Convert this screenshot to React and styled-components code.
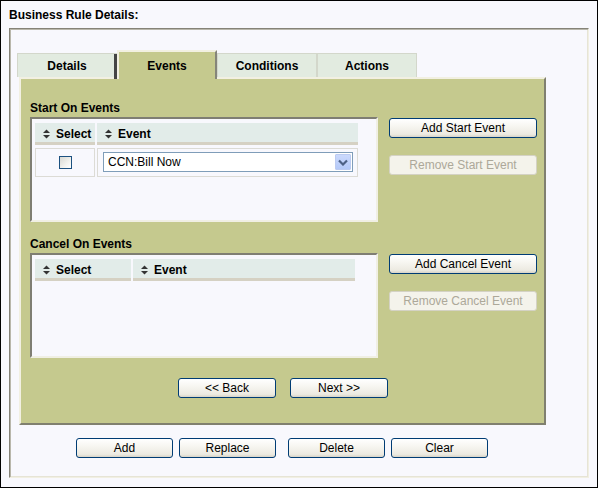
import React from 'react';
import styled, { createGlobalStyle, css } from 'styled-components';

const Global = createGlobalStyle`
  html, body { margin: 0; padding: 0; background: #f8f8fd; }
  body { font-family: "Liberation Sans", Arial, sans-serif; font-size: 12px; color: #000; }
  * { box-sizing: border-box; }
`;

const Frame = styled.div`
  width: 598px;
  height: 488px;
  border: 1px solid #000;
  background: #f8f8fd;
  padding: 7px 0 0 8px;
`;

const Title = styled.div`
  font-weight: bold;
  font-size: 12px;
  line-height: 14px;
  height: 14px;
`;

const Fieldset = styled.div`
  margin-top: 6px;
  width: 580px;
  height: 450px;
  border: 1px solid;
  border-color: #858378 #f1efe2 #f1efe2 #858378;
  box-shadow: inset 1px 1px 0 #b9b7ab, inset -1px -1px 0 #e6e4d6;
  padding: 21px 0 0 7px;
`;

const TabRow = styled.div`
  display: flex;
  align-items: flex-end;
  height: 27px;
`;

const Tab = styled.div`
  width: 100px;
  height: 24px;
  background: #e2ebe0;
  border: 1px solid #d3d7cb;
  border-bottom: none;
  font-weight: bold;
  text-align: center;
  line-height: 14px;
  padding-top: 5px;
  ${p => p.$active && css`
    position: relative;
    z-index: 1;
    height: 29px;
    margin-bottom: -2px;
    background: #c5c98e;
    border-top: 2px solid #f2f0e2;
    border-left: 2px solid #f2f0e2;
    border-right: 2px solid #85857a;
    padding-top: 7px;
    &::before {
      content: '';
      position: absolute;
      left: -5px;
      top: 2px;
      bottom: 0;
      width: 3px;
      background: #454545;
    }
  `}
`;

const Panel = styled.div`
  margin-left: 2px;
  width: 527px;
  height: 348px;
  background: #c5c98e;
  border: 2px solid;
  border-color: #f2f0e2 #80806f #80806f #f2f0e2;
  padding: 21px 0 0 9px;
`;

const Section = styled.div`
  display: grid;
  grid-template-columns: 348px 148px;
  column-gap: 11px;
  row-gap: 3px;
  margin-top: ${p => p.$top || 0}px;
`;

const SectionLabel = styled.div`
  grid-column: 1 / 3;
  font-weight: bold;
  line-height: 14px;
  height: 14px;
  padding-top: 1px;
`;

const ListBox = styled.div`
  width: 348px;
  height: 105px;
  background: #f8f8fd;
  border: 2px solid;
  border-color: #7f7e73 #f0efe4 #f0efe4 #7f7e73;
  padding: 4px 0 0 3px;
`;

const Grid = styled.div`
  display: grid;
  grid-template-columns: ${p => p.$cols};
  column-gap: 2px;
  row-gap: 3px;
`;

const HeadCell = styled.div`
  height: 22px;
  background: #e2ece9;
  border-bottom: 3px solid #d5d1c3;
  display: flex;
  align-items: center;
  padding: 2px 0 0 8px;
  gap: 6px;
  font-weight: bold;
`;

const BodyCell = styled.div`
  height: 29px;
  border: 1px solid #dcdbd5;
  display: flex;
  align-items: flex-start;
  justify-content: ${p => (p.$center ? 'center' : 'flex-start')};
  padding: ${p => (p.$center ? '7px 0 0 0' : '3px 0 0 5px')};
`;

const Checkbox = styled.span`
  display: block;
  width: 13px;
  height: 13px;
  border: 1px solid #1c5180;
  background: linear-gradient(135deg, #d8d8d2 0%, #f2f2ee 60%, #ffffff 100%);
`;

const FakeSelect = styled.div`
  width: 250px;
  height: 20px;
  border: 1px solid #7f9db9;
  background: #fff;
  display: flex;
  align-items: center;
  justify-content: space-between;
  padding-left: 4px;
  font-size: 12px;
`;

const DropButton = styled.span`
  width: 16px;
  height: 16px;
  margin-right: 1px;
  border-radius: 1px;
  background: linear-gradient(#cbd9fd, #b4c9f8);
  border: 1px solid #bccbf1;
  display: flex;
  align-items: center;
  justify-content: center;
`;

const ButtonCol = styled.div`
  display: flex;
  flex-direction: column;
  gap: 17px;
  padding-top: 1px;
`;

const Button = styled.button`
  width: ${p => p.$w}px;
  height: 20px;
  padding: 0;
  font-family: "Liberation Sans", Arial, sans-serif;
  font-size: 12px;
  color: #000;
  border: 1px solid #003c74;
  border-radius: 3px;
  background: linear-gradient(#ffffff 0%, #f7f6f1 40%, #eceae1 85%, #d8d3c7 100%);
  cursor: default;
  &:disabled {
    border-color: #d4d2c4;
    background: #f4f3eb;
    color: #aca899;
  }
`;

const NavRow = styled.div`
  display: flex;
  gap: 14px;
  margin-top: 20px;
  padding-left: 148px;
`;

const BottomRow = styled.div`
  display: flex;
  margin-top: 13px;
  padding-left: 59px;
`;

const Group = styled.div`
  display: flex;
  gap: 6px;
  margin-right: 12px;
`;

const SortIcon = () => (
  <svg width="7" height="10" viewBox="0 0 7 10" aria-hidden="true">
    <polygon points="3.5,0.5 7,4 0,4" fill="#333" />
    <polygon points="0,6 7,6 3.5,9.5" fill="#333" />
  </svg>
);

const Chevron = () => (
  <svg width="10" height="7" viewBox="0 0 10 7" aria-hidden="true">
    <polyline points="1,1.5 5,5.5 9,1.5" fill="none" stroke="#4d6185" strokeWidth="2.2" />
  </svg>
);

const Header = ({ children }) => (
  <HeadCell>
    <SortIcon />
    <span>{children}</span>
  </HeadCell>
);

export default function App() {
  return (
    <>
      <Global />
      <Frame>
        <Title>Business Rule Details:</Title>
        <Fieldset>
          <TabRow>
            <Tab>Details</Tab>
            <Tab $active>Events</Tab>
            <Tab>Conditions</Tab>
            <Tab>Actions</Tab>
          </TabRow>
          <Panel>
            <Section>
              <SectionLabel>Start On Events</SectionLabel>
              <ListBox>
                <Grid $cols="60px 261px">
                  <Header>Select</Header>
                  <Header>Event</Header>
                  <BodyCell $center>
                    <Checkbox />
                  </BodyCell>
                  <BodyCell>
                    <FakeSelect>
                      <span>CCN:Bill Now</span>
                      <DropButton>
                        <Chevron />
                      </DropButton>
                    </FakeSelect>
                  </BodyCell>
                </Grid>
              </ListBox>
              <ButtonCol>
                <Button $w={148}>Add Start Event</Button>
                <Button $w={148} disabled>Remove Start Event</Button>
              </ButtonCol>
            </Section>
            <Section $top={14}>
              <SectionLabel>Cancel On Events</SectionLabel>
              <ListBox>
                <Grid $cols="96px 222px">
                  <Header>Select</Header>
                  <Header>Event</Header>
                </Grid>
              </ListBox>
              <ButtonCol>
                <Button $w={148}>Add Cancel Event</Button>
                <Button $w={148} disabled>Remove Cancel Event</Button>
              </ButtonCol>
            </Section>
            <NavRow>
              <Button $w={98}>&lt;&lt; Back</Button>
              <Button $w={98}>Next &gt;&gt;</Button>
            </NavRow>
          </Panel>
          <BottomRow>
            <Group>
              <Button $w={97}>Add</Button>
              <Button $w={97}>Replace</Button>
            </Group>
            <Group>
              <Button $w={97}>Delete</Button>
              <Button $w={97}>Clear</Button>
            </Group>
          </BottomRow>
        </Fieldset>
      </Frame>
    </>
  );
}
